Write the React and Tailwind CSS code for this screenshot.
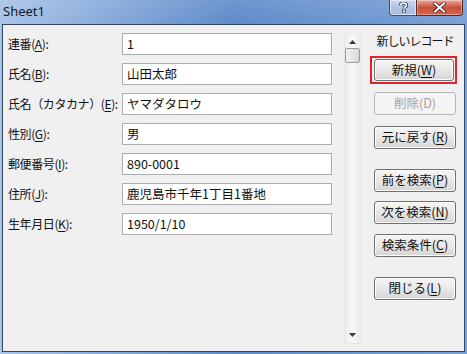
const font = { fontFamily: '"Noto Sans CJK JP", "Noto Sans", sans-serif' }

const fields = [
    ['連番', 'A', '1'],
    ['氏名', 'B', '山田太郎'],
    ['氏名（カタカナ）', 'E', 'ヤマダタロウ'],
    ['性別', 'G', '男'],
    ['郵便番号', 'I', '890-0001'],
    ['住所', 'J', '鹿児島市千年1丁目1番地'],
    ['生年月日', 'K', '1950/1/10'],
]

function Key({ k }) {
    return <>(<span className="underline underline-offset-2">{k}</span>)</>
}

function Btn({ label, k, disabled, mt, className = '' }) {
    return (
        <div
            className={`h-[23px] flex items-center justify-center whitespace-nowrap rounded-[3px] border text-[12.5px] ${disabled
                ? 'border-[#b5b9bd] bg-[#f4f4f4] text-[#a3a3a3]'
                : 'border-[#707070] bg-gradient-to-b from-[#f6f6f6] via-[#e8e8e8] to-[#d5d5d5] text-[#111] shadow-[inset_0_0_0_1px_#fbfbfb]'
                } ${mt} ${className}`}
        >
            {label}{disabled ? `(${k})` : <Key k={k} />}
        </div>
    )
}

export default function App() {
    return (
        <div className="w-[467px] h-[354px] flex flex-col bg-gradient-to-r from-[#a9c4e7] via-[#5f8bca] to-[#79a0d7] overflow-hidden" style={font}>
            {/* title bar */}
            <div className="h-[24px] relative shrink-0 bg-gradient-to-b from-white/10 to-transparent">
                <span className="absolute left-[3px] top-[2px] text-[13px] text-[#111a2a]" style={{ fontFamily: '"Noto Sans", sans-serif' }}>Sheet1</span>
                <div className="absolute left-[389px] top-0 w-[28px] h-[16px] rounded-bl-[4px] border border-t-0 border-[#3d5372] bg-gradient-to-b from-[#c9d9f0] via-[#afc5e6] to-[#a5bee3] flex items-center justify-center shadow-[inset_0_0_0_1px_rgba(255,255,255,0.5)]">
                    <svg width="9" height="11" viewBox="0 0 9 11">
                        <path d="M1.5 3.5 Q1.5 1 4.5 1 Q7.5 1 7.5 3.3 Q7.5 4.8 5.5 5.6 L5.5 7" fill="none" stroke="#2b3b52" strokeWidth="3.2" strokeLinejoin="round" />
                        <path d="M1.5 3.5 Q1.5 1 4.5 1 Q7.5 1 7.5 3.3 Q7.5 4.8 5.5 5.6 L5.5 7" fill="none" stroke="#fff" strokeWidth="1.6" strokeLinejoin="round" />
                        <rect x="3.6" y="8" width="2.8" height="2.8" fill="#fff" stroke="#2b3b52" strokeWidth="0.8" />
                    </svg>
                </div>
                <div className="absolute left-[416px] top-0 w-[47px] h-[16px] rounded-br-[4px] border border-t-0 border-[#5a2a24] bg-gradient-to-b from-[#e9a99b] via-[#c9503a] to-[#d6634a] flex items-center justify-center shadow-[inset_0_0_0_1px_rgba(255,255,255,0.35)]">
                    <svg width="13" height="11" viewBox="0 0 13 11">
                        <path d="M2 1.5 L11 9.5 M11 1.5 L2 9.5" stroke="#3a1a16" strokeWidth="3.6" strokeLinecap="square" />
                        <path d="M2 1.5 L11 9.5 M11 1.5 L2 9.5" stroke="#fff" strokeWidth="2" strokeLinecap="square" />
                    </svg>
                </div>
            </div>

            {/* client area */}
            <div className="flex-1 mx-[2px] mb-[2px] border border-[#34465e] bg-[#f0f0f0] flex text-[#111]">
                <div className="pl-[5px] pt-[8px] flex flex-col gap-[8px]">
                    {fields.map(([label, k, value]) => (
                        <div key={k} className="flex items-center h-[22px]">
                            <div className="w-[114px] text-[12px] tracking-[-0.4px] whitespace-nowrap">{label}<Key k={k} />:</div>
                            <div className="w-[210px] h-[22px] border border-[#abadb3] bg-white px-[4px] flex items-center text-[12.5px] whitespace-nowrap">{value}</div>
                        </div>
                    ))}
                </div>

                {/* scrollbar */}
                <div className="ml-[12px] mt-[8px] w-[17px] h-[311px] border border-[#e6e6e6] bg-gradient-to-r from-[#ececec] via-[#f8f8f8] to-[#ececec] flex flex-col items-center">
                    <svg className="mt-[6px]" width="7" height="4" viewBox="0 0 7 4"><path d="M0 4 L3.5 0 L7 4 Z" fill="#3a3a3a" /></svg>
                    <div className="mt-[4px] w-[15px] h-[15px] rounded-[2px] border border-[#9a9a9a] bg-gradient-to-r from-[#f3f3f3] via-[#e6e6e6] to-[#d6d6d6]" />
                    <div className="flex-1" />
                    <svg className="mb-[6px]" width="7" height="4" viewBox="0 0 7 4"><path d="M0 0 L7 0 L3.5 4 Z" fill="#3a3a3a" /></svg>
                </div>

                {/* buttons */}
                <div className="ml-[13px] w-[82px] flex flex-col">
                    <div className="mt-[8px] h-[16px] leading-[16px] flex justify-center whitespace-nowrap text-[12px] tracking-[-1px]">新しいレコード</div>
                    <div className="mt-[7px] -ml-[4px] w-[87px] h-[28px] border-2 border-[#e0242c] p-[1px] pl-[2px]">
                        <Btn label="新規" k="W" mt="" className="h-full" />
                    </div>
                    <Btn label="削除" k="D" disabled mt="mt-[8px]" />
                    <Btn label="元に戻す" k="R" mt="mt-[11px]" />
                    <Btn label="前を検索" k="P" mt="mt-[20px]" />
                    <Btn label="次を検索" k="N" mt="mt-[9px]" />
                    <Btn label="検索条件" k="C" mt="mt-[10px]" />
                    <Btn label="閉じる" k="L" mt="mt-[20px]" />
                </div>
            </div>
        </div>
    )
}
